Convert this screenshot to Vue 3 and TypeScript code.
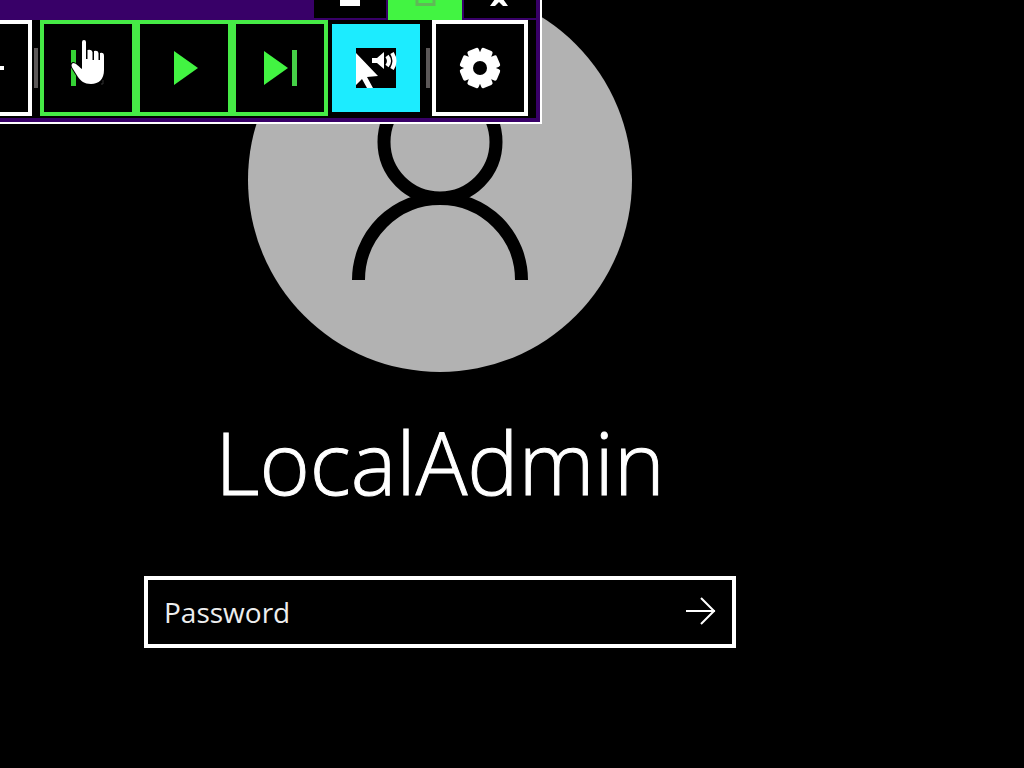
<script setup lang="ts">
import { ref } from 'vue'

const password = ref('')
const gearTeeth: number[] = [22.5, 67.5, 112.5, 157.5]
</script>

<template>
  <div class="screen">
    <main class="login">
      <svg class="avatar" viewBox="0 0 384 384" aria-hidden="true">
        <circle cx="192" cy="192" r="192" fill="#b2b2b2" />
        <g fill="none" stroke="#000" stroke-width="13">
          <circle cx="192" cy="154" r="56" />
          <path d="M110.500 292a81.500 81.500 0 0 1 163 0" />
        </g>
      </svg>
      <h1 class="user">LocalAdmin</h1>
      <form class="field" @submit.prevent>
        <input v-model="password" type="password" placeholder="Password" aria-label="Password" />
        <button class="submit" type="submit" aria-label="Submit">
          <svg width="32" height="32" viewBox="0 0 32 32" fill="none" stroke="#fff" stroke-width="2">
            <path d="M2 16h29M17 3l13 13-13 13" />
          </svg>
        </button>
      </form>
    </main>

    <section class="window" aria-label="Speech controls">
      <header class="titlebar">
        <button class="caption" aria-label="Minimize">
          <svg width="24" height="18" viewBox="0 0 24 18"><path d="M2 0h20v6H2z" fill="#fff" /></svg>
        </button>
        <button class="caption maximize" aria-label="Maximize">
          <svg width="24" height="18" viewBox="0 0 24 18"><path d="M4 -4v8.500h17v-8.500" fill="none" stroke="#5fb957" stroke-width="3" /></svg>
        </button>
        <button class="caption" aria-label="Close">
          <svg width="24" height="18" viewBox="0 0 24 18"><path d="M2 6 7 -1h8l5 7h-5l-4-4-4 4z" fill="#fff" /></svg>
        </button>
      </header>
      <div class="toolbar">
        <button class="tool partial" aria-label="Increase">
          <svg width="28" height="88" viewBox="0 0 28 88"><path d="M0 42h4v4H0z" fill="#fff" /></svg>
        </button>
        <span class="divider"></span>
        <button class="tool green" aria-label="Previous">
          <svg width="88" height="88" viewBox="0 0 88 88">
            <path d="M27 26h5v36h-5z" fill="#35d235" />
            <path
              d="M38 18q0-2 2-2t2 2V35h1.500V26q4-1 5 2v8h1.500v-9q4-1 4.500 2v7h1.500v-7q4-1 4 3v14c0 9-5 14-13 14-7 0-10-3-13-7l-5-8c-2-3-2-5 0-6 3 0 5 3 9 6z"
              fill="#fff" stroke="#000" stroke-width="2" paint-order="stroke"
            />
            <path d="M59 56v4h-2" fill="none" stroke="#333" />
          </svg>
        </button>
        <button class="tool green" aria-label="Play">
          <svg width="88" height="88" viewBox="0 0 88 88"><path d="M34 27v34l24-17z" fill="#42f442" /></svg>
        </button>
        <button class="tool green" aria-label="Next">
          <svg width="88" height="88" viewBox="0 0 88 88">
            <path d="M28 27v34l24-17z" fill="#42f442" />
            <path d="M56 26h5v36h-5z" fill="#45d047" />
          </svg>
        </button>
        <button class="tool active" aria-label="Read at cursor">
          <svg width="88" height="88" viewBox="0 0 88 88">
            <path d="M24 24h40v40H24z" />
            <path d="M24 29v32l6-6 5 9h6l-6-11 11-1z" fill="#fff" />
            <path d="M40 34h5l7-6v17l-7-6h-5z" fill="#fff" />
            <path d="M55 32q4 5 0 10M60 29q5 8 0 16" fill="none" stroke="#fff" stroke-width="4" />
          </svg>
        </button>
        <span class="divider"></span>
        <button class="tool" aria-label="Settings">
          <svg width="88" height="88" viewBox="0 0 88 88">
            <g fill="#fff">
              <circle cx="44" cy="44" r="16" />
              <rect v-for="a in gearTeeth" :key="a" x="38" y="24" width="12" height="40" rx="2" :transform="`rotate(${a} 44 44)`" />
            </g>
            <circle cx="44" cy="44" r="7" />
          </svg>
        </button>
      </div>
    </section>
  </div>
</template>

<style>
body {
  margin: 0;
  background: #000;
}
</style>

<style scoped>
.screen {
  position: relative;
  min-height: 100vh;
  overflow: hidden;
  box-sizing: border-box;
  background: #000;
  color: #fff;
  font-family: "Open Sans", "Noto Sans", sans-serif;
}

.login {
  display: flex;
  flex-direction: column;
  align-items: center;
  padding: 0 144px 40px 0;
}

.avatar {
  width: 384px;
  height: 384px;
  margin-top: -12px;
}

.user {
  margin: 30px 0 54px;
  font-size: 86px;
  line-height: 120px;
  font-weight: 300;
  -webkit-text-stroke: 1px #fff;
}

.field {
  display: flex;
  align-items: center;
  box-sizing: border-box;
  width: 100%;
  max-width: 592px;
  height: 72px;
  border: 4px solid #fff;
}

.field input {
  flex: 1;
  min-width: 0;
  height: 64px;
  box-sizing: border-box;
  padding: 0 16px;
  border: 0;
  outline: 0;
  background: #000;
  color: #fff;
  font: 400 28px "Open Sans", "Noto Sans", sans-serif;
}

.field input::placeholder {
  color: #eee;
  opacity: 1;
}

button {
  display: flex;
  align-items: center;
  justify-content: center;
  box-sizing: border-box;
  padding: 0;
  margin: 0;
  border: 0;
  background: #000;
  flex: none;
}

svg {
  display: block;
  flex: none;
}

.submit {
  width: 64px;
  height: 60px;
  padding-bottom: 2px;
}

.window {
  position: absolute;
  top: 0;
  left: 0;
  padding: 0 4px 4px 0;
  border-right: 2px solid #fff;
  border-bottom: 2px solid #fff;
  background: #380068;
}

.titlebar {
  display: flex;
  justify-content: flex-end;
  align-items: flex-start;
  gap: 2px;
  height: 20px;
}

.caption {
  width: 72px;
  height: 18px;
}

.caption.maximize {
  width: 74px;
  height: 20px;
  align-items: flex-start;
  background: #42f442;
}

.toolbar {
  display: flex;
  padding: 0 8px 2px 0;
  background: #000;
}

.tool {
  width: 96px;
  height: 96px;
  border: 4px solid #fff;
}

.tool.partial {
  width: 32px;
  border-left: 0;
}

.tool.green {
  border-color: #46ea46;
}

.tool.active {
  border-color: #000;
  background: #1cecff;
}

.divider {
  align-self: center;
  width: 4px;
  height: 40px;
  margin: 0 2px;
  background: #5c5858;
}
</style>
